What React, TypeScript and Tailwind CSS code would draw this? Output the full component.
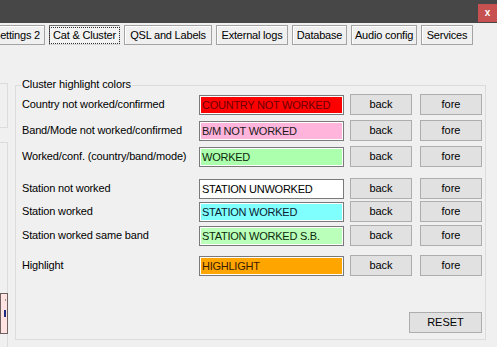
import React from "react";

const tabs = [
  { label: "Settings 2", w: "w-[57px]", first: true },
  { label: "Cat & Cluster", w: "w-[71px]", active: true },
  { label: "QSL and Labels", w: "w-[88px]" },
  { label: "External logs", w: "w-[72px]" },
  { label: "Database", w: "w-[55px]" },
  { label: "Audio config", w: "w-[66px]" },
  { label: "Services", w: "w-[52px]" },
];

const rows = [
  { label: "Country not worked/confirmed", text: "COUNTRY NOT WORKED", box: "bg-[#ff0000] text-[#6a0000]", mt: "mt-0" },
  { label: "Band/Mode not worked/confirmed", text: "B/M NOT WORKED", box: "bg-[#ffb4dc] text-[#1a1a1a]", mt: "mt-[5px]" },
  { label: "Worked/conf. (country/band/mode)", text: "WORKED", box: "bg-[#acffac] text-[#0a2a0a]", mt: "mt-[5px]" },
  { label: "Station not worked", text: "STATION UNWORKED", box: "bg-white text-black", mt: "mt-[11px]" },
  { label: "Station worked", text: "STATION WORKED", box: "bg-[#80ffff] text-[#0a2030]", mt: "mt-[2px]" },
  { label: "Station worked same band", text: "STATION WORKED S.B.", box: "bg-[#baffba] text-[#0a2a0a]", mt: "mt-[3px]" },
  { label: "Highlight", text: "HIGHLIGHT", box: "bg-[#ffa500] text-[#3a1a00]", mt: "mt-[9px]" },
];

const WinButton = ({ label, w }: { label: string; w: string }) => (
  <button className={`${w} h-[21px] bg-[#e1e1e1] border border-[#adadad] text-[11px] leading-none text-black flex items-center justify-center`}>
    {label}
  </button>
);

const App = () => {
  return (
    <div className="w-[497px] h-[347px] overflow-hidden bg-[#f0f0f0] flex flex-col text-black font-['Liberation_Sans',Arial,sans-serif]">
      {/* title bar */}
      <div className="h-[23px] bg-[#474747] flex justify-end items-start shrink-0">
        <div className="w-[19px] h-[18px] mt-[4px] bg-[#c75050] flex items-center justify-center text-white text-[10px] font-bold leading-none">
          x
        </div>
      </div>

      {/* tabs */}
      <div className="h-[20px] mt-[2px] flex gap-[4px] shrink-0">
        {tabs.map((t, i) => (
          <div
            key={i}
            className={`${t.w} ${t.first ? "-ml-[12px]" : ""} h-[20px] shrink-0 flex items-center justify-center text-[11px] leading-none tracking-[-0.2px] ${
              t.active
                ? "bg-[#f3f3f3] border border-t-[#6d6d6d] border-l-[#6d6d6d] border-r-[#d8d8d8] border-b-[#d8d8d8]"
                : "bg-[#f0f0f0] border border-[#a3a3a3] shadow-[inset_1px_1px_0_#ffffff]"
            }`}
          >
            {t.active ? (
              <span className="px-[3px] py-[2px] outline-1 outline-dotted outline-[#333]">{t.label}</span>
            ) : (
              <span>{t.label}</span>
            )}
          </div>
        ))}
      </div>

      {/* content */}
      <div className="flex flex-1 min-h-0">
        {/* clipped neighbouring panels */}
        <div className="w-[8px] shrink-0 flex flex-col pt-[38px]">
          <div className="h-[45px] border-t border-r border-b border-[#dcdcdc]" />
          <div className="flex-1 mt-[14px] border-t border-r border-[#dcdcdc] pt-[150px]">
            <div className="w-[8px] h-[41px] bg-[#ffe2e2] border border-[#6f6060] flex flex-col items-end">
              <span className="w-[1px] h-[2px] bg-[#999] mt-[5px] mr-[1px]" />
              <span className="w-[2px] h-[7px] bg-[#1c2a80] mt-[9px] mr-[1px]" />
            </div>
          </div>
        </div>

        {/* group box */}
        <div className="ml-[7px] mt-[40px] w-[471px] h-[255px] border border-[#dcdcdc] relative flex flex-col pt-[8px] pl-[6px] pr-[3px]">
          <span className="absolute -top-[8px] left-[5px] px-[1px] bg-[#f0f0f0] text-[11px] leading-[13px] tracking-[-0.1px]">
            Cluster highlight colors
          </span>

          {rows.map((r, i) => (
            <div key={i} className={`${r.mt} h-[21px] flex items-start`}>
              <div className="w-[177px] h-[21px] flex items-center text-[11px] leading-none whitespace-nowrap tracking-[-0.15px]">
                {r.label}
              </div>
              <div className="w-[145px] h-[20px] mt-[1px] border border-[#7a7a7a] bg-white p-[1px]">
                <div className={`${r.box} w-full h-full flex items-center pl-[1px] text-[11px] leading-none whitespace-nowrap overflow-hidden tracking-[-0.25px]`}>
                  {r.text}
                </div>
              </div>
              <div className="ml-[6px]">
                <WinButton label="back" w="w-[62px]" />
              </div>
              <div className="ml-[8px]">
                <WinButton label="fore" w="w-[62px]" />
              </div>
            </div>
          ))}

          <div className="mt-[36px] self-end">
            <WinButton label="RESET" w="w-[73px]" />
          </div>
        </div>
      </div>
    </div>
  );
};

export default App;
